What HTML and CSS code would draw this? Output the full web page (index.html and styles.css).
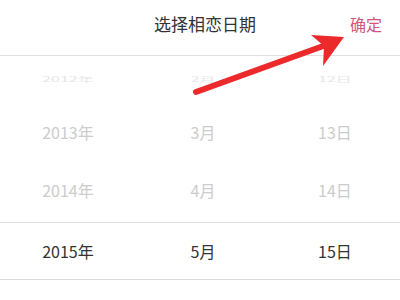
FILE: index.html
```html
<!DOCTYPE html>
<html lang="zh-CN">
<head>
    <meta charset="UTF-8">
    <meta name="viewport" content="width=device-width, initial-scale=1.0">
    <title>选择相恋日期</title>
    <link rel="stylesheet" href="styles.css">
</head>
<body>
    <!-- Header -->
    <div class="picker-header">
        <div class="picker-title">选择相恋日期</div>
        <div class="picker-ok">确定</div>
    </div>

    <!-- Date wheel -->
    <div class="wheel">
        <div class="wheel-row edge">
            <span>2012年</span><span>2月</span><span>12日</span>
        </div>
        <div class="wheel-row faded">
            <span>2013年</span><span>3月</span><span>13日</span>
        </div>
        <div class="wheel-row faded near">
            <span>2014年</span><span>4月</span><span>14日</span>
        </div>
        <div class="wheel-row selected">
            <span>2015年</span><span>5月</span><span>15日</span>
        </div>
    </div>

    <!-- Annotation arrow -->
    <svg class="arrow" width="400" height="300" viewBox="0 0 400 300">
        <line x1="196" y1="92" x2="326" y2="45" stroke="#ec2a2c" stroke-width="6" stroke-linecap="round"/>
        <polygon points="344,37 311,35 324,46 323,66" fill="#ec2a2c"/>
    </svg>
</body>
</html>
```

FILE: styles.css
```css
* {
    box-sizing: border-box;
    margin: 0;
    padding: 0;
}

body {
    width: 400px;
    height: 300px;
    overflow: hidden;
    background: #ffffff;
    font-family: "Noto Sans CJK SC", "Noto Sans", sans-serif;
    font-size: 16px;
    color: #333333;
    position: relative;
}

/* Header */
.picker-header {
    display: grid;
    grid-template-columns: 1fr auto 1fr;
    align-items: center;
    height: 56px;
    padding: 0 18px 8px 28px;
    border-bottom: 1px solid #e0e0e0;
}

.picker-title {
    grid-column: 2;
    font-size: 17px;
    color: #333333;
}

.picker-ok {
    grid-column: 3;
    justify-self: end;
    font-size: 16px;
    color: #d2557b;
}

/* Wheel rows */
.wheel-row {
    display: grid;
    grid-template-columns: 136px 134px 1fr;
    justify-items: center;
    align-items: center;
    height: 60px;
}

.wheel-row.edge {
    height: 46px;
    color: #e6e6e6;
}

.wheel-row.edge span {
    transform: scaleY(0.45);
}

.wheel-row.faded {
    color: #cccccc;
}

.wheel-row.near {
    padding-bottom: 4px;
}

.wheel-row.selected {
    height: 58px;
    color: #333333;
    border-top: 1px solid #dcdcdc;
    border-bottom: 1px solid #dcdcdc;
}

/* Arrow annotation */
.arrow {
    position: absolute;
    top: 0;
    left: 0;
}
```
